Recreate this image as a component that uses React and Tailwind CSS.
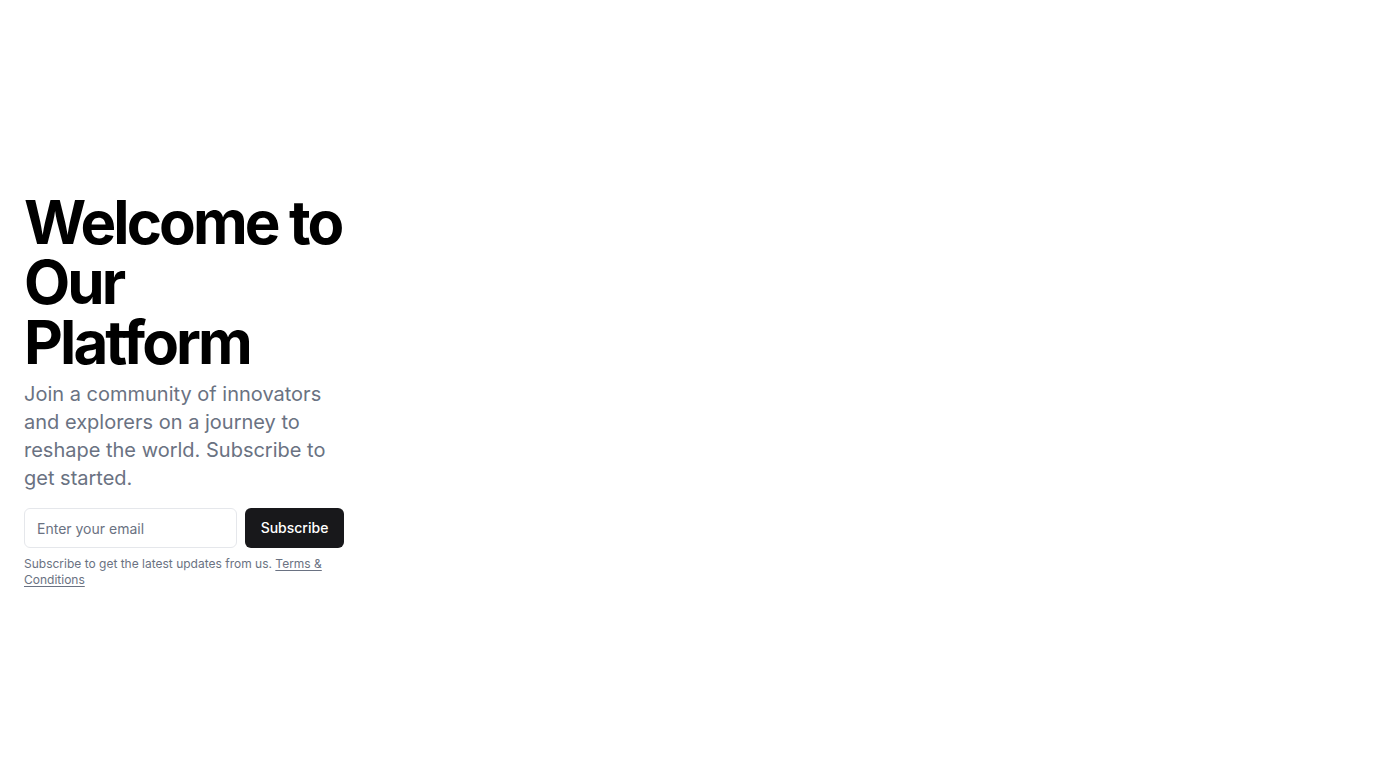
export default function App() {
  return (
    <div className="h-screen w-full bg-white flex items-center px-6" style={{ fontFamily: "Inter, 'Noto Sans', sans-serif" }}>
      <div className="w-[320px] flex flex-col">
        <h1 className="text-6xl leading-none font-bold tracking-[-0.048em] text-black">
          Welcome to Our Platform
        </h1>
        <p className="mt-2 text-xl leading-7 text-gray-500">
          Join a community of innovators and explorers on a journey to reshape the world. Subscribe to get started.
        </p>
        <form className="mt-4 flex gap-2" onSubmit={(e) => e.preventDefault()}>
          <input
            type="email"
            placeholder="Enter your email"
            className="h-10 flex-1 min-w-0 rounded-md border border-gray-200 bg-white px-3 text-sm text-gray-900 placeholder:text-gray-500 outline-none"
          />
          <button type="submit" className="h-10 w-[99px] rounded-md bg-[#18181b] text-sm font-medium text-white">
            Subscribe
          </button>
        </form>
        <p className="mt-2 text-xs leading-4 text-gray-500">
          Subscribe to get the latest updates from us.{" "}
          <a href="#" className="underline underline-offset-2">Terms &amp; Conditions</a>
        </p>
      </div>
    </div>
  );
}
